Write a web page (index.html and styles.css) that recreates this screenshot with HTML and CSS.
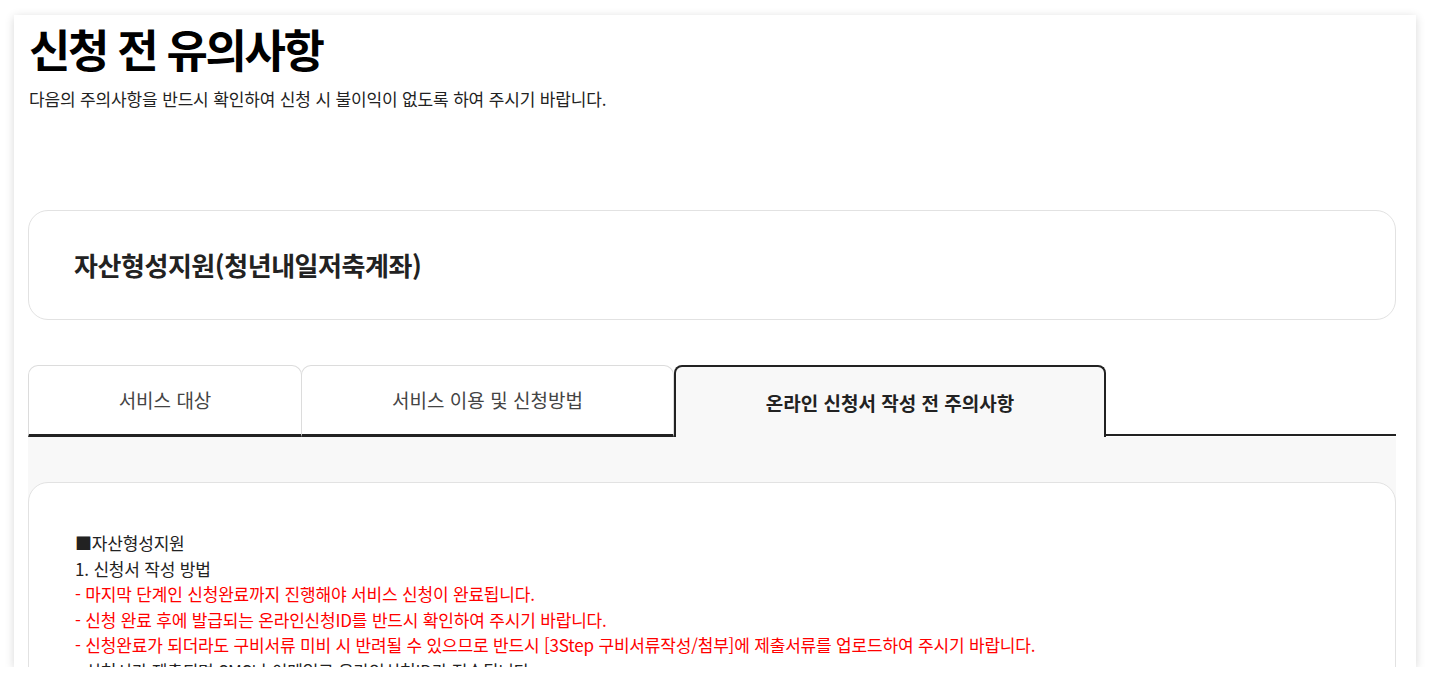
FILE: index.html
```html
<!DOCTYPE html>
<html lang="ko">
<head>
<meta charset="utf-8">
<title>신청 전 유의사항</title>
<link rel="stylesheet" href="styles.css">
</head>
<body>
<div class="panel">
  <h1 class="title">신청 전 유의사항</h1>
  <p class="subtitle">다음의 주의사항을 반드시 확인하여 신청 시 불이익이 없도록 하여 주시기 바랍니다.</p>

  <div class="service-card">
    <h2 class="service-name">자산형성지원(청년내일저축계좌)</h2>
  </div>

  <div class="tabs">
    <div class="tab tab-1">서비스 대상</div>
    <div class="tab tab-2">서비스 이용 및 신청방법</div>
    <div class="tab tab-3 active">온라인 신청서 작성 전 주의사항</div>
    <div class="tab-fill"></div>
  </div>

  <div class="tab-body">
    <div class="notice-card">
      <p class="line">■자산형성지원</p>
      <p class="line">1. 신청서 작성 방법</p>
      <p class="line red">- 마지막 단계인 신청완료까지 진행해야 서비스 신청이 완료됩니다.</p>
      <p class="line red">- 신청 완료 후에 발급되는 온라인신청ID를 반드시 확인하여 주시기 바랍니다.</p>
      <p class="line red">- 신청완료가 되더라도 구비서류 미비 시 반려될 수 있으므로 반드시 [3Step 구비서류작성/첨부]에 제출서류를 업로드하여 주시기 바랍니다.</p>
      <p class="line">- 신청서가 제출되면 SMS나 이메일로 온라인신청ID가 전송됩니다.</p>
    </div>
  </div>
</div>
</body>
</html>
```

FILE: styles.css
```css
* {
  box-sizing: border-box;
}

html, body {
  margin: 0;
  background: #ffffff;
}

body {
  padding: 15px 15px 0 14px;
  font-family: "Noto Sans CJK KR", "Noto Sans", sans-serif;
  color: #222;
}

.panel {
  width: 1402px;
  height: 652px;
  overflow: hidden;
  background: #ffffff;
  padding: 7px 20px 0 14px;
  box-shadow: 0 2px 9px rgba(0, 0, 0, 0.16);
}

.title {
  margin: 0;
  font-size: 45px;
  line-height: 53px;
  font-weight: 700;
  letter-spacing: -2.4px;
  color: #000;
  padding-left: 1px;
}

.subtitle {
  margin: 12px 0 0;
  font-size: 17px;
  line-height: 24px;
  letter-spacing: -0.15px;
  color: #222;
  padding-left: 1px;
}

.service-card {
  margin-top: 99px;
  height: 110px;
  border: 1px solid #e2e2e2;
  border-radius: 20px;
  display: flex;
  align-items: center;
  padding-left: 45px;
}

.service-name {
  margin: 0;
  font-size: 26px;
  line-height: 34px;
  font-weight: 700;
  letter-spacing: -0.45px;
  color: #222;
}

.tabs {
  margin-top: 45px;
  display: flex;
  align-items: flex-start;
}

.tab {
  height: 72px;
  display: flex;
  align-items: center;
  justify-content: center;
  font-size: 19px;
  letter-spacing: 0;
  color: #444;
  border: 1px solid #dcdcdc;
  border-bottom: 3px solid #222;
  border-radius: 10px 10px 0 0;
  padding-bottom: 2px;
}

.tab-1 {
  width: 274px;
}

.tab-2 {
  width: 373px;
  margin-left: -1px;
}

.tab-3 {
  width: 432px;
}

.tab.active {
  border: 2px solid #222;
  border-bottom: none;
  border-radius: 8px 8px 0 0;
  background: #f8f8f8;
  color: #222;
  font-weight: 700;
  padding-bottom: 0;
}

.tab-fill {
  flex: 1;
  height: 71px;
  border-bottom: 2px solid #222;
}

.tab-body {
  background: #f8f8f8;
  padding-top: 45px;
}

.notice-card {
  background: #ffffff;
  border: 1px solid #e2e2e2;
  border-radius: 20px;
  padding: 47px 46px 40px;
}

.line {
  margin: 0;
  font-size: 17px;
  line-height: 25.5px;
  letter-spacing: -0.18px;
  color: #222;
}

.line.red {
  color: #ff0000;
}
```
